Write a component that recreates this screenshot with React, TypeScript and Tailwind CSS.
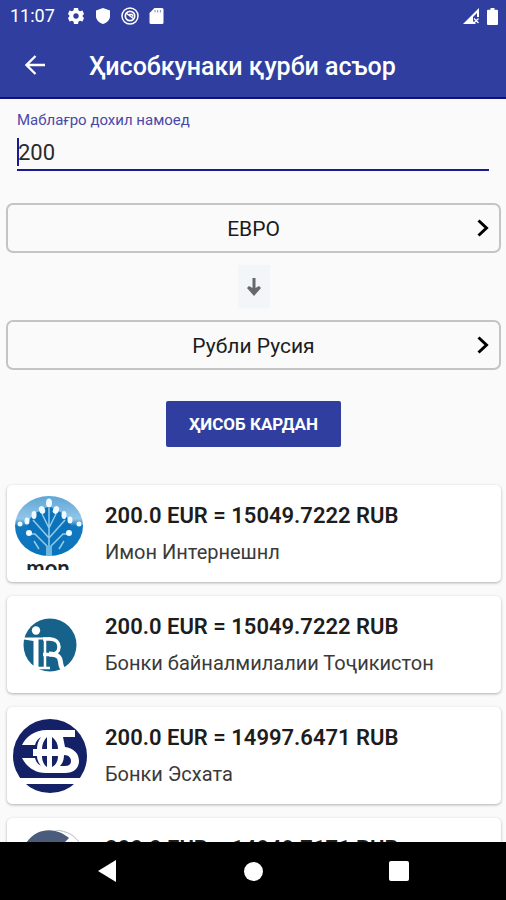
import type { ReactNode } from "react";

function StatusBar() {
  return (
    <div className="flex h-8 shrink-0 items-center pr-2 pl-[10px] text-white">
      <span className="w-[58px] text-[18px] leading-8">11:07</span>
      <div className="flex items-center gap-[11px]">
        <svg className="size-4" viewBox="0 0 24 24" fill="currentColor" aria-hidden="true">
          <path
            fillRule="evenodd"
            d="M9 0h6l.8 3.6 2.4 1.4L21.700 3.900l2.300 5-2.600 3.100 2.600 3.100-2.300 5-3.500-1.100-2.400 1.400L15 24H9l-.8-3.600L5.800 19l-3.500 1.100-2.300-5L2.600 12 0 8.900l2.300-5L5.800 5l2.400-1.400zM12 8a4 4 0 1 0 0 8 4 4 0 0 0 0-8z"
          />
        </svg>
        <svg className="size-4" viewBox="0 0 16 16" fill="currentColor" aria-hidden="true">
          <path d="M8 0l7 2.500v5.500c0 3.800-3 7-7 8-4-1-7-4.200-7-8V2.500z" />
        </svg>
        <svg className="-ml-px size-[18px]" viewBox="0 0 18 18" fill="none" stroke="currentColor" aria-hidden="true">
          <circle cx="9" cy="9" r="8" strokeWidth="1.500" />
          <circle cx="9" cy="9" r="4.700" strokeWidth="1.700" />
          <path d="M5 6l8 6M8 7.500h3l1 2" strokeWidth="1.500" />
        </svg>
        <svg className="-ml-px h-4 w-[15px]" viewBox="0 0 15 16" fill="currentColor" aria-hidden="true">
          <path d="M5.500 0H13a1.500 1.500 0 0 1 1.500 1.500v13A1.500 1.500 0 0 1 13 16H2a1.500 1.500 0 0 1-1.500-1.500V5z" />
          <path d="M6 2v2.500M8.700 2v2.500M11.400 2v2.500" stroke="#303f9f" strokeOpacity="0.600" />
        </svg>
      </div>
      <div className="ml-auto flex items-center gap-2">
        <svg className="size-4" viewBox="0 0 16 16" fill="currentColor" aria-hidden="true">
          <path d="M16 0v9h-2V5l-4 4v4l3 3H0z" />
          <path d="M11 10.500l4.500 4.500M15.500 10.500L11 15" stroke="currentColor" strokeWidth="1.300" />
        </svg>
        <svg className="h-[17px] w-[11px]" viewBox="0 0 11 17" fill="currentColor" aria-hidden="true">
          <path d="M3.500 0h4v1.700H10a1 1 0 0 1 1 1V16a1 1 0 0 1-1 1H1a1 1 0 0 1-1-1V2.700a1 1 0 0 1 1-1h2.500z" />
        </svg>
      </div>
    </div>
  );
}

function PickerButton({ children }: { children: ReactNode }) {
  return (
    <button
      type="button"
      className="grid h-[50px] w-full grid-cols-[32px_1fr_32px] items-center rounded-[7px] border-2 border-[#c4c4c4] bg-[#fafafa] text-[21px] leading-7 text-[#1c1c1c]"
    >
      <span className="col-start-2 pt-[2px]">{children}</span>
      <svg className="h-[18px] w-[12px] justify-self-center" viewBox="0 0 12 18" fill="none" stroke="#000" strokeWidth="3" aria-hidden="true">
        <path d="M1.500 1.500L9.500 9l-8 7.500" />
      </svg>
    </button>
  );
}

function ImonLogo() {
  return (
    <svg className="h-[76px] w-[70px]" viewBox="0 0 70 76" role="img" aria-label="Имон Интернешнл">
      <defs>
        <linearGradient id="imon" x1="0" y1="0" x2="0" y2="1">
          <stop offset="0" stopColor="#5fa6d6" />
          <stop offset="0.380" stopColor="#93c6e7" />
          <stop offset="0.500" stopColor="#1279c0" />
          <stop offset="1" stopColor="#0873bd" />
        </linearGradient>
        <clipPath id="imonWord">
          <rect x="0" y="64" width="70" height="10" />
        </clipPath>
      </defs>
      <ellipse cx="34" cy="30" rx="34" ry="30" fill="url(#imon)" />
      <path d="M12 31c1-8 8-15 13-16l9-5 9 5c6 2 12 8 13 16l-6 18-16 9-16-9z" fill="#0c73ba" />
      <g fill="none" stroke="#8fcdec" strokeWidth="1.500">
        <path d="M34 12v48M34 42L18 24M34 42l16-18M34 32l-7-14M34 32l7-14M32 60V50L20 38h-6M36 60V50l12-12h6M24 53l-5-8M44 53l5-8" />
      </g>
      <g fill="#eefaff">
        <ellipse cx="34" cy="7" rx="3" ry="4.500" />
        <ellipse cx="27" cy="14" rx="3" ry="4" transform="rotate(-20 27 14)" />
        <ellipse cx="41" cy="14" rx="3" ry="4" transform="rotate(20 41 14)" />
        <ellipse cx="19" cy="19" rx="2.500" ry="4" />
        <ellipse cx="49" cy="19" rx="2.500" ry="4" />
        <ellipse cx="12" cy="25" rx="2.500" ry="3.500" />
        <ellipse cx="55" cy="24" rx="2.500" ry="3.500" />
        <circle cx="5" cy="28" r="2.500" />
        <circle cx="64" cy="28" r="2.500" />
        <circle cx="14" cy="37" r="3" />
        <circle cx="54" cy="37" r="3" />
      </g>
      <text x="33" y="80" textAnchor="middle" clipPath="url(#imonWord)" fontFamily="Lato, sans-serif" fontSize="22" fontWeight="700" fill="#20252b">
        mon
      </text>
    </svg>
  );
}

function InternationalBankLogo() {
  return (
    <svg className="size-[54px]" viewBox="0 0 54 54" role="img" aria-label="Бонки байналмилалии Тоҷикистон">
      <circle cx="27" cy="27" r="26.500" fill="#17628a" />
      <circle cx="13" cy="12.500" r="4.200" fill="#fff" />
      <path d="M1 19.500h27v2H15.500V54h-5V23L1 21.500z" fill="#fff" />
      <g fill="none" stroke="#fff">
        <path d="M20 21h6.500c7 0 9.500 4 9.500 8s-3 7.500-9 7.500h-7" strokeWidth="3.500" />
        <path d="M26 36c9 0 11 3 11.500 8s1.500 7 4 8" strokeWidth="5" />
        <path d="M22 20v30M15 50h12" strokeWidth="2.500" />
      </g>
    </svg>
  );
}

function EskhataLogo() {
  return (
    <svg className="size-[74px]" viewBox="0 0 74 74" role="img" aria-label="Бонки Эсхата">
      <circle cx="37" cy="37" r="37" fill="#152167" />
      <path
        d="M62 11H34C21 11 13 18 9 26h13l1 4h-3v7h3l-1 2H9c4 8 12 15 24 15h19c9 0 14-5 14-12 0-8-6-13-14-14l-2-10h12z"
        fill="#fff"
      />
      <g fill="#152167">
        <path d="M34 18c-3 3-5 7-5 12h5zM39 18c4 3 6 7 6 12h-6zM29 37c0 5 2 9 5 11V37zM39 37h6c0 5-2 9-6 11z" />
        <path d="M51 36c5 0 7 3 7 6s-2 5-6 5h-5c3-3 4-7 4-11zM22 26c1-4 3-6 6-8-3 4-4 8-4 12h-2zM22 39c1 4 3 6 6 8-3-4-4-7-4-10h-2z" />
      </g>
      <path d="M5 59h64v6H5z" fill="#fff" />
    </svg>
  );
}

function SlateLogo() {
  return (
    <svg className="size-[74px]" viewBox="0 0 74 74" aria-hidden="true">
      <path d="M56 8L50 14v46H20C4 52 0 30 13 13 24-3 43-3 56 8z" fill="#4b5b7b" />
      <path d="M42 0c12 1 20 5 26 15" fill="none" stroke="#b5b8be" />
    </svg>
  );
}

const offers = [
  { bank: "Имон Интернешнл", rate: "200.0 EUR = 15049.7222 RUB", logo: <ImonLogo /> },
  { bank: "Бонки байналмилалии Тоҷикистон", rate: "200.0 EUR = 15049.7222 RUB", logo: <InternationalBankLogo /> },
  { bank: "Бонки Эсхата", rate: "200.0 EUR = 14997.6471 RUB", logo: <EskhataLogo /> },
  { bank: "", rate: "200.0 EUR = 14949.7171 RUB", logo: <SlateLogo /> },
];

export default function App() {
  return (
    <div className="flex h-screen flex-col overflow-hidden bg-[#fafafa] font-['Roboto','Noto_Sans',sans-serif]">
      <header className="shrink-0 border-b-2 border-[#10107c] bg-[#303f9f] text-white">
        <StatusBar />
        <div className="flex h-[65px] items-center gap-[44px] pl-[25px]">
          <button type="button" aria-label="Бозгашт">
            <svg className="size-5" viewBox="0 0 20 20" fill="none" stroke="currentColor" strokeWidth="2.300" aria-hidden="true">
              <path d="M20 10H2M10.500 1L1.500 10l9 9" />
            </svg>
          </button>
          <h1 className="pt-1 text-[25px] leading-8 font-medium">Ҳисобкунаки қурби асъор</h1>
        </div>
      </header>

      <main className="min-h-0 flex-1 overflow-hidden">
        <div className="px-[17px] pt-2">
          <label htmlFor="amount" className="block text-[15px] leading-[26px] text-[#4a48ab]">
            Маблағро дохил намоед
          </label>
          <div className="flex h-[38px] items-center border-b-2 border-[#1a1a94] pt-[2px]">
            <span className="-mr-px h-7 w-[2px] shrink-0 bg-[#1a1a94]" />
            <input
              id="amount"
              inputMode="decimal"
              defaultValue="200"
              className="w-full min-w-0 bg-transparent p-0 text-[22px] text-[#2a2a2a] outline-none"
            />
          </div>
        </div>

        <div className="flex flex-col items-center pt-8 pr-[5px] pl-[6px]">
          <PickerButton>ЕВРО</PickerButton>
          <button type="button" aria-label="Иваз кардан" className="my-3 flex h-[43px] w-8 items-center justify-center bg-[#f3f6f8]">
            <svg className="h-[18px] w-[14px]" viewBox="0 0 14 18" aria-hidden="true">
              <path d="M5.500 0h3v10L12 8l2 2-7 8-7-8 2-2 3.500 2z" fill="#66686a" />
            </svg>
          </button>
          <PickerButton>Рубли Русия</PickerButton>
          <button type="button" className="mt-[31px] h-[46px] rounded-[2px] bg-[#303f9f] px-[23px] pt-[2px] text-[17px] font-bold text-white">
            ҲИСОБ КАРДАН
          </button>
        </div>

        <ul className="mt-[38px] flex flex-col gap-[14px] pr-[5px] pl-[7px]">
          {offers.map((offer, index) => (
            <li key={index} className="flex h-[97px] items-center rounded-[5px] bg-white shadow-[0_1px_3px_rgba(0,0,0,0.3)]">
              <div className="flex w-[85px] shrink-0 justify-center">{offer.logo}</div>
              <div className="min-w-0 pl-[13px]">
                <p className="h-9 text-[22px] leading-9 font-semibold whitespace-nowrap text-[#1d1d1d]">{offer.rate}</p>
                <p className="h-9 text-[20px] leading-9 whitespace-nowrap text-[#3a3a3a]">{offer.bank}</p>
              </div>
            </li>
          ))}
        </ul>
      </main>

      <nav className="grid h-[58px] shrink-0 grid-cols-[1fr_40px_106px_40px_106px_40px_1fr] items-center bg-black text-white">
        <button type="button" aria-label="Back" className="col-start-2 flex justify-center">
          <svg className="h-[22px] w-[18px]" viewBox="0 0 18 22" fill="currentColor" aria-hidden="true">
            <path d="M18 0v22L0 11z" />
          </svg>
        </button>
        <button type="button" aria-label="Home" className="col-start-4 flex justify-center">
          <span className="size-[19px] rounded-full bg-white" />
        </button>
        <button type="button" aria-label="Overview" className="col-start-6 flex justify-center">
          <span className="size-5 rounded-[2px] bg-white" />
        </button>
      </nav>
    </div>
  );
}
